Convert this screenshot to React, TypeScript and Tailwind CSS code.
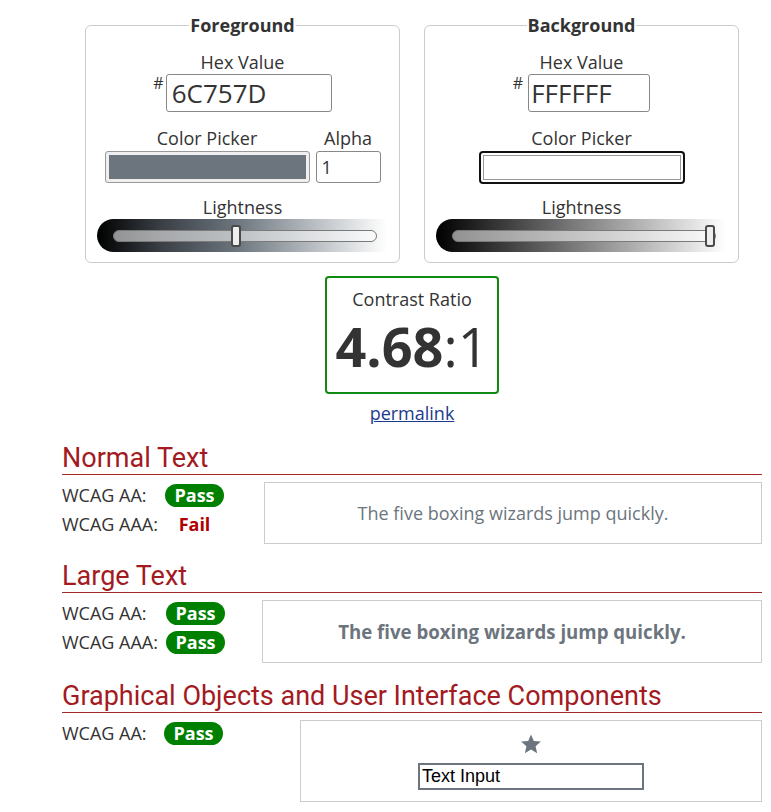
import React from "react";

function Slider({ gradient, pos }: { gradient: string; pos: number }) {
  return (
    <div
      className="relative mx-auto h-[33px] w-[290px] rounded-l-full"
      style={{ background: gradient }}
    >
      <div className="absolute left-[16px] right-[10px] top-[11px] h-[12px] rounded-full border border-[#7a7a7a] bg-[rgba(255,255,255,0.55)]" />
      <div
        className="absolute top-[6px] h-[22px] w-[10px] rounded-[3px] border-2 border-[#4a4a4a] bg-[#eeeeee]"
        style={{ left: pos }}
      />
    </div>
  );
}

function Fieldset({ title, children }: { title: string; children: React.ReactNode }) {
  return (
    <fieldset className="w-[315px] rounded-[6px] border border-[#cccccc] px-0 pb-[10px]">
      <legend className="mx-auto px-[1px] text-[18px] font-bold leading-[24px] text-[#333]">
        {title}
      </legend>
      {children}
    </fieldset>
  );
}

function Pass() {
  return (
    <span className="inline-flex h-[23px] w-[59px] items-center justify-center rounded-full bg-[#008000] text-[18px] font-bold text-white">
      Pass
    </span>
  );
}

function Heading({ children }: { children: React.ReactNode }) {
  return (
    <h2
      className="border-b border-[#a52a2a] text-[27px] leading-[32px] text-[#a31a22]"
      style={{ fontFamily: "Roboto, 'Liberation Sans', sans-serif" }}
    >
      {children}
    </h2>
  );
}

export default function App() {
  return (
    <div
      className="min-h-[812px] bg-white text-[#333] text-[18px]"
      style={{ fontFamily: "'Open Sans', 'Liberation Sans', sans-serif" }}
    >
      <div className="ml-[62px] w-[700px] pt-[13px]">
        {/* Pickers */}
        <div className="flex justify-center gap-[24px]">
          <Fieldset title="Foreground">
            <div className="mt-[13px] text-center leading-[24px]">Hex Value</div>
            <div className="flex justify-center">
              <span className="mr-[2px] text-[16px] leading-[18px]">#</span>
              <div className="flex h-[38px] w-[166px] items-center rounded-[3px] border border-[#888] px-[5px] text-[26px]">
                6C757D
              </div>
            </div>
            <div className="mt-[14px] flex justify-center gap-[6px]">
              <div className="flex flex-col items-center">
                <div className="leading-[24px]">Color Picker</div>
                <div className="mt-[1px] h-[32px] w-[205px] rounded-[3px] border border-[#999] bg-[#efefef] p-[3px]">
                  <div className="h-full w-full bg-[#6c757d]" />
                </div>
              </div>
              <div className="flex flex-col items-center">
                <div className="leading-[24px]">Alpha</div>
                <div className="mt-[1px] flex h-[32px] w-[65px] items-center rounded-[3px] border border-[#888] px-[5px] text-[18px]">
                  1
                </div>
              </div>
            </div>
            <div className="mt-[13px] text-center leading-[23px]">Lightness</div>
            <div className="pr-[2px]">
              <Slider
                gradient="linear-gradient(to right, #000 0%, #3a3f45 22%, #6c757d 48%, #b9bec3 75%, #ffffff 100%)"
                pos={134}
              />
            </div>
          </Fieldset>
          <Fieldset title="Background">
            <div className="mt-[13px] text-center leading-[24px]">Hex Value</div>
            <div className="flex justify-center">
              <span className="mr-[5px] text-[16px] leading-[18px]">#</span>
              <div className="flex h-[38px] w-[122px] items-center rounded-[3px] border border-[#888] px-[2px] text-[26px]">
                FFFFFF
              </div>
            </div>
            <div className="mt-[14px] flex flex-col items-center">
              <div className="leading-[24px]">Color Picker</div>
              <div className="mt-[1px] h-[33px] w-[206px] rounded-[4px] border-2 border-[#111] bg-white p-[2px]">
                <div className="h-full w-full border border-[#999] bg-white" />
              </div>
            </div>
            <div className="mt-[12px] text-center leading-[23px]">Lightness</div>
            <div className="pr-[2px]">
              <Slider gradient="linear-gradient(to right, #000 0%, #808080 50%, #ffffff 100%)" pos={269} />
            </div>
          </Fieldset>
        </div>

        {/* Contrast ratio */}
        <div className="mt-[13px] flex flex-col items-center">
          <div className="h-[118px] w-[174px] rounded-[4px] border-2 border-[#108a10] text-center">
            <div className="mt-[10px] text-[18px] leading-[22px]">Contrast Ratio</div>
            <div className="mt-[9px] text-[54px] leading-[54px] text-[#333]">
              <span className="font-bold">4.68</span>:1
            </div>
          </div>
          <a className="mt-[7px] text-[18px] leading-[24px] text-[#1c3a8c] underline" href="#">
            permalink
          </a>
        </div>

        {/* Normal text */}
        <div className="mt-[17px]">
          <Heading>Normal Text</Heading>
          <div className="mt-[7px] flex">
            <div className="w-[202px]">
              <div className="flex h-[26px] items-center">
                <span className="w-[103px]">WCAG AA:</span>
                <Pass />
              </div>
              <div className="mt-[3px] flex h-[26px] items-center">
                <span className="w-[103px]">WCAG AAA:</span>
                <span className="w-[59px] text-center font-bold text-[#b00000]">Fail</span>
              </div>
            </div>
            <div className="flex h-[62px] flex-1 items-center justify-center border border-[#cccccc] text-[18px] text-[#6c757d]">
              The five boxing wizards jump quickly.
            </div>
          </div>
        </div>

        {/* Large text */}
        <div className="mt-[16px]">
          <Heading>Large Text</Heading>
          <div className="mt-[7px] flex">
            <div className="w-[200px]">
              <div className="flex h-[26px] items-center">
                <span className="w-[104px]">WCAG AA:</span>
                <Pass />
              </div>
              <div className="mt-[3px] flex h-[26px] items-center">
                <span className="w-[104px]">WCAG AAA:</span>
                <Pass />
              </div>
            </div>
            <div className="flex h-[63px] flex-1 items-center justify-center border border-[#cccccc] text-[18.66px] font-bold text-[#6c757d]">
              The five boxing wizards jump quickly.
            </div>
          </div>
        </div>

        {/* Graphical */}
        <div className="mt-[17px]">
          <Heading>Graphical Objects and User Interface Components</Heading>
          <div className="mt-[7px] flex">
            <div className="w-[238px]">
              <div className="flex h-[26px] items-center">
                <span className="w-[102px]">WCAG AA:</span>
                <Pass />
              </div>
            </div>
            <div className="flex h-[82px] flex-1 flex-col items-center border border-[#cccccc] pt-[12px]">
              <svg width="22" height="22" viewBox="0 0 24 24" className="ml-[-1px]">
                <path
                  d="M12 1.5l3.1 7.1 7.7.7-5.8 5.1 1.7 7.6L12 18l-6.7 4 1.7-7.6L1.2 9.3l7.7-.7z"
                  fill="#6c757d"
                />
              </svg>
              <div
                className="mt-[8px] flex h-[27px] w-[226px] items-center border-2 border-[#6c757d] px-[2px] text-[18px] text-black"
                style={{ fontFamily: "'Liberation Sans', Arial, sans-serif" }}
              >
                Text Input
              </div>
            </div>
          </div>
        </div>
      </div>
    </div>
  );
}
